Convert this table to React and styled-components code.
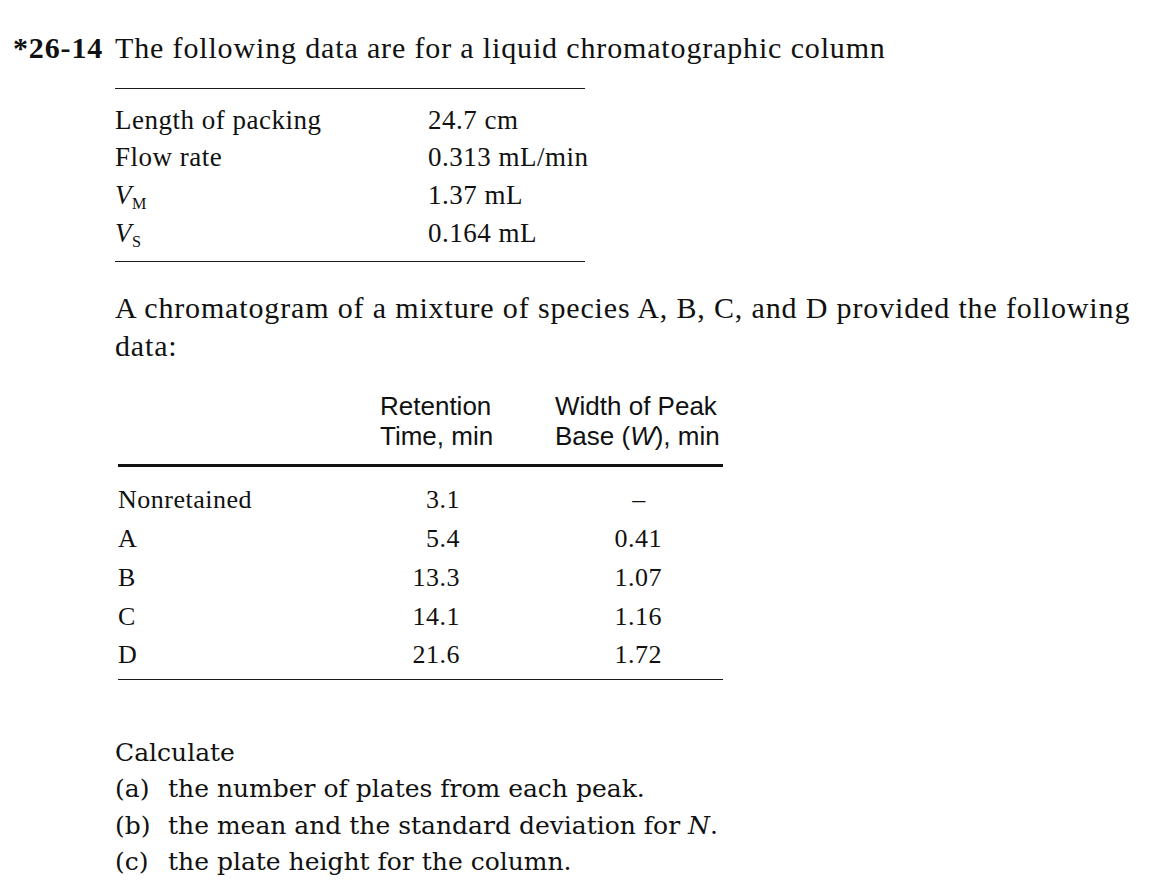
import React from "react";
import styled, { createGlobalStyle } from "styled-components";

const GlobalStyle = createGlobalStyle`
  html, body {
    margin: 0;
    padding: 0;
    background: #fff;
  }
  body {
    font-family: "Liberation Serif", "Times New Roman", serif;
    color: #111;
  }
`;

const Page = styled.main`
  box-sizing: border-box;
  min-height: 893px;
  padding: 30px 0 40px 13px;
  display: grid;
  grid-template-columns: 102px 1fr;
  align-items: start;
`;

const ProblemNo = styled.span`
  font-weight: 700;
  font-size: 30px;
  line-height: 36px;
  letter-spacing: 0.85px;
`;

const Body = styled.div`
  display: flex;
  flex-direction: column;
  align-items: flex-start;
`;

const Lead = styled.p`
  margin: 0;
  font-size: 30px;
  line-height: 36px;
  letter-spacing: 0.85px;
  white-space: nowrap;
`;

const DataTable = styled.div`
  margin-top: 22px;
  width: 470px;
  padding: 12.5px 0 9px;
  border-top: 1.5px solid #1a1a1a;
  border-bottom: 1.5px solid #1a1a1a;
  display: grid;
  grid-template-columns: 313px 1fr;
  font-size: 27px;
  line-height: 37.7px;
  letter-spacing: 0.5px;
  white-space: nowrap;
`;

const Sub = styled.sub`
  font-style: normal;
  font-size: 0.6em;
  line-height: 0;
  vertical-align: -0.32em;
  letter-spacing: 0;
`;

const Paragraph = styled.p`
  margin: 27px 0 0;
  width: 1045px;
  font-size: 30px;
  line-height: 38px;
  letter-spacing: 0.85px;
`;

const PeakTable = styled.div`
  margin: 26px 0 0 3px;
  width: 605px;
`;

const columns = "262px 175px 168px";

const Head = styled.div`
  display: grid;
  grid-template-columns: ${columns};
  padding-bottom: 13px;
  border-bottom: 3px solid #111;
  font-family: "Liberation Sans", Arial, sans-serif;
  font-size: 26px;
  line-height: 30px;
  white-space: nowrap;
`;

const Rows = styled.div`
  display: grid;
  grid-template-columns: ${columns};
  padding: 14px 0 3.5px;
  border-bottom: 1.5px solid #1a1a1a;
  font-size: 26px;
  line-height: 38.75px;
  letter-spacing: 0.5px;
  white-space: nowrap;
`;

const Cell = styled.span`
  text-align: ${(p) => p.$align || "left"};
  padding-right: ${(p) => p.$pad || 0}px;
`;

const Calculate = styled.div`
  margin-top: 55px;
  font-family: "DejaVu Serif", "Liberation Serif", serif;
  font-size: 25px;
  line-height: 36.5px;
`;

const Part = styled.div`
  display: grid;
  grid-template-columns: 53px 1fr;
`;

const packing = [
  ["Length of packing", "24.7 cm"],
  ["Flow rate", "0.313 mL/min"],
  [<><i>V</i><Sub>M</Sub></>, "1.37 mL"],
  [<><i>V</i><Sub>S</Sub></>, "0.164 mL"],
];

const peaks = [
  ["Nonretained", "3.1", "–"],
  ["A", "5.4", "0.41"],
  ["B", "13.3", "1.07"],
  ["C", "14.1", "1.16"],
  ["D", "21.6", "1.72"],
];

const parts = [
  ["(a)", "the number of plates from each peak."],
  ["(b)", <>the mean and the standard deviation for <i>N</i>.</>],
  ["(c)", "the plate height for the column."],
];

export default function App() {
  return (
    <>
      <GlobalStyle />
      <Page>
        <ProblemNo>*26-14</ProblemNo>
        <Body>
          <Lead>The following data are for a liquid chromatographic column</Lead>

          <DataTable>
            {packing.map(([label, value], i) => (
              <React.Fragment key={i}>
                <span>{label}</span>
                <span>{value}</span>
              </React.Fragment>
            ))}
          </DataTable>

          <Paragraph>
            A chromatogram of a mixture of species A, B, C, and D provided the
            following data:
          </Paragraph>

          <PeakTable>
            <Head>
              <span />
              <span>Retention<br />Time, min</span>
              <span>Width of Peak<br />Base (<i>W</i>), min</span>
            </Head>
            <Rows>
              {peaks.map(([name, time, width]) => (
                <React.Fragment key={name}>
                  <Cell>{name}</Cell>
                  <Cell $align="right" $pad={95}>{time}</Cell>
                  {width === "–" ? (
                    <Cell $align="center">{width}</Cell>
                  ) : (
                    <Cell $align="right" $pad={61}>{width}</Cell>
                  )}
                </React.Fragment>
              ))}
            </Rows>
          </PeakTable>

          <Calculate>
            <div>Calculate</div>
            {parts.map(([tag, text]) => (
              <Part key={tag}>
                <span>{tag}</span>
                <span>{text}</span>
              </Part>
            ))}
          </Calculate>
        </Body>
      </Page>
    </>
  );
}
